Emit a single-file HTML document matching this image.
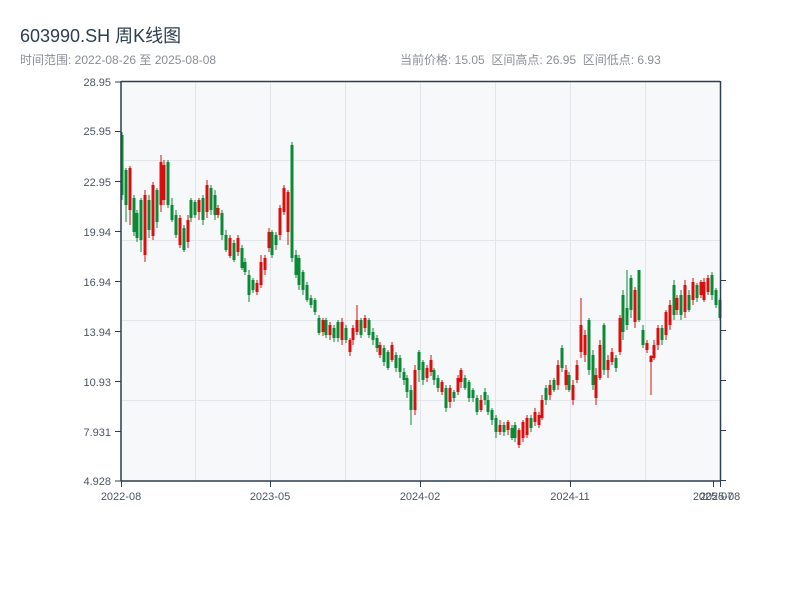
<!DOCTYPE html>
<html><head><meta charset="utf-8">
<style>
html,body{margin:0;padding:0;background:#fff;width:800px;height:600px;overflow:hidden;font-family:"Liberation Sans","Noto Sans CJK SC",sans-serif}
.t{position:absolute;left:20px;top:22px;font-size:18px;color:#2c3e50}
.s{position:absolute;left:20px;top:51px;font-size:12px;color:#8a8f95}
.r{position:absolute;left:400px;top:51px;font-size:12px;color:#8a8f95}
svg{position:absolute;left:0;top:0}
</style></head><body>
<div class="t">603990.SH 周K线图</div>
<div class="s">时间范围: 2022-08-26 至 2025-08-08</div>
<div class="r">当前价格: 15.05&nbsp;&nbsp;区间高点: 26.95&nbsp;&nbsp;区间低点: 6.93</div>
<svg width="800" height="600" xmlns="http://www.w3.org/2000/svg" font-family="Liberation Sans, sans-serif" font-size="11">
<rect x="121" y="81" width="599" height="400" fill="#f6f8fa"/>
<g stroke="#e2e5e9" stroke-width="1">
<line x1="195.5" y1="81" x2="195.5" y2="481"/><line x1="270.5" y1="81" x2="270.5" y2="481"/>
<line x1="345.5" y1="81" x2="345.5" y2="481"/><line x1="420.5" y1="81" x2="420.5" y2="481"/>
<line x1="495.5" y1="81" x2="495.5" y2="481"/><line x1="570.5" y1="81" x2="570.5" y2="481"/>
<line x1="645.5" y1="81" x2="645.5" y2="481"/>
<line x1="121" y1="160.5" x2="720" y2="160.5"/><line x1="121" y1="240.5" x2="720" y2="240.5"/>
<line x1="121" y1="320.5" x2="720" y2="320.5"/><line x1="121" y1="400.5" x2="720" y2="400.5"/>
</g>
<g fill="none">
<path stroke="#0b8a35" stroke-width="1" d="M122 132V200M126 168V222M134 195V236M137 210V242M141 198V252M149 195V238M157 188V228M168 160V208M172 198V222M176 210V238M184 225V252M191 198V222M195 200V218M203 195V225M211 185V215M215 190V220M222 210V240M226 230V252M234 240V262M242 245V270M245 258V275M249 270V302M253 278V293M272 230V258M276 232V250M292 142V262M296 250V278M299 255V290M303 270V295M307 282V302M311 295V308M315 298V315M319 315V335M326 318V338M334 325V342M338 320V342M346 325V343M361 318V338M369 318V338M373 328V345M377 335V352M384 345V366M388 350V370M396 352V372M400 355V378M404 368V385M407 375V398M411 385V425M419 350V382M423 360V385M434 368V385M438 375V392M446 385V412M454 390V402M465 375V390M469 380V402M473 388V402M477 395V415M485 388V405M488 395V415M492 408V425M496 415V438M504 422V436M512 425V440M515 422V442M531 415V432M546 385V405M554 378V392M562 345V372M569 372V392M589 318V375M593 350V390M604 323V375M616 355V372M623 290V340M627 270V330M631 275V318M639 270V322M643 325V348M662 325V345M674 280V320M681 290V320M689 290V312M697 283V302M712 272V300M716 288V308M720 298V320"/>
<path stroke="#0b8a35" stroke-width="3" d="M122 135V195M126 170V205M134 198V232M137 213V238M141 200V240M149 200V230M157 190V222M168 162V205M172 205V220M176 215V235M184 228V250M191 200V218M195 202V215M203 198V220M211 188V210M215 195V215M222 213V235M226 235V250M234 243V260M242 248V268M245 262V272M249 275V295M253 280V290M272 232V255M276 235V245M292 145V258M296 255V275M299 258V285M303 272V290M307 285V300M311 298V305M315 300V312M319 318V333M326 320V335M334 328V338M338 322V338M346 328V340M361 320V335M369 320V335M373 332V340M377 338V348M384 348V362M388 352V368M396 355V368M400 358V372M404 372V380M407 378V392M411 390V410M419 352V370M423 362V380M434 370V380M438 378V388M446 388V408M454 392V398M465 378V388M469 382V398M473 390V398M477 398V412M485 392V400M488 400V412M492 410V420M496 418V432M504 425V432M512 428V438M515 425V438M531 418V428M546 388V400M554 380V390M562 348V368M569 375V390M589 320V370M593 355V385M604 325V370M616 358V368M623 295V332M627 308V325M631 278V310M639 270V320M643 330V345M662 328V340M674 285V315M681 295V315M689 295V310M697 285V298M712 275V295M716 290V305M720 300V318"/>
<path stroke="#d90f0f" stroke-width="1" d="M130 166V225M145 190V262M153 182V240M161 155V212M164 160V205M180 215V248M188 215V248M199 198V220M207 180V218M218 205V218M230 235V258M238 235V256M257 280V295M261 255V288M265 255V275M269 228V252M280 205V240M284 185V215M288 190V245M323 318V336M330 322V340M342 318V345M350 338V356M353 325V345M357 305V335M365 315V332M380 342V358M392 342V362M415 365V415M427 365V382M431 355V376M442 380V395M450 385V408M458 375V395M461 368V388M481 395V412M500 420V435M508 420V435M519 428V448M523 420V442M527 415V438M535 408V426M539 412V428M542 395V420M550 380V400M558 360V390M566 365V390M573 380V405M577 360V383M581 298V358M585 330V362M596 368V405M600 340V380M608 355V378M612 348V365M620 315V355M635 287V328M647 340V353M651 355V395M654 340V360M658 325V350M666 310V340M670 300V330M677 295V315M685 280V318M693 278V305M701 280V298M704 278V302M708 275V295"/>
<path stroke="#d90f0f" stroke-width="3" d="M130 168V210M145 195V255M153 185V236M161 162V205M164 165V200M180 218V245M188 220V242M199 200V212M207 185V212M218 208V215M230 238V256M238 238V252M257 283V292M261 262V285M265 258V270M269 232V248M280 208V235M284 188V212M288 192V232M323 320V332M330 325V335M342 322V340M350 340V352M353 328V340M357 320V332M365 318V328M380 345V355M392 345V360M415 370V410M427 368V378M431 360V372M442 382V392M450 388V402M458 378V392M461 370V382M481 400V410M500 425V432M508 422V430M519 430V445M523 422V438M527 418V435M535 412V422M539 415V425M542 400V418M550 385V395M558 365V385M566 370V385M573 385V400M577 365V380M581 325V352M585 335V355M596 375V398M600 345V378M608 360V370M612 352V362M620 318V352M635 290V322M647 343V350M651 356V362M654 345V358M658 328V345M666 312V335M670 305V325M677 298V310M685 285V312M693 282V300M701 282V295M704 282V300M708 278V292"/>
</g>
<g stroke="#2c3e50" stroke-width="1.5" fill="none">
<line x1="121" y1="81" x2="121" y2="481"/><line x1="121" y1="481" x2="720" y2="481"/>
<line x1="720.5" y1="81" x2="720.5" y2="481"/><line x1="121" y1="81.5" x2="720" y2="81.5"/>
</g>
<g stroke="#2c3e50" stroke-width="1">
<line x1="115" y1="82" x2="121" y2="82"/><line x1="115" y1="131.5" x2="121" y2="131.5"/><line x1="115" y1="181.5" x2="121" y2="181.5"/><line x1="115" y1="231.5" x2="121" y2="231.5"/><line x1="115" y1="281.5" x2="121" y2="281.5"/><line x1="115" y1="331.5" x2="121" y2="331.5"/><line x1="115" y1="381.5" x2="121" y2="381.5"/><line x1="115" y1="431.5" x2="121" y2="431.5"/><line x1="115" y1="481" x2="121" y2="481"/>
<line x1="720" y1="280.5" x2="726" y2="280.5"/><line x1="720" y1="330.5" x2="726" y2="330.5"/><line x1="720" y1="380.5" x2="726" y2="380.5"/><line x1="720" y1="430.5" x2="726" y2="430.5"/><line x1="720" y1="480.5" x2="726" y2="480.5"/>
<line x1="121.5" y1="481" x2="121.5" y2="487"/><line x1="270.5" y1="481" x2="270.5" y2="487"/><line x1="420.5" y1="481" x2="420.5" y2="487"/><line x1="570.5" y1="481" x2="570.5" y2="487"/><line x1="713.5" y1="481" x2="713.5" y2="487"/><line x1="720.5" y1="481" x2="720.5" y2="487"/>
</g>
<g fill="#4a5563" text-anchor="end">
<text x="111" y="86">28.95</text><text x="111" y="135">25.95</text><text x="111" y="186">22.95</text><text x="111" y="236">19.94</text><text x="111" y="286">16.94</text><text x="111" y="336">13.94</text><text x="111" y="386">10.93</text><text x="111" y="436">7.931</text><text x="111" y="485">4.928</text>
</g>
<g fill="#4a5563" text-anchor="middle">
<text x="121" y="500">2022-08</text><text x="270" y="500">2023-05</text><text x="420" y="500">2024-02</text><text x="570" y="500">2024-11</text><text x="713" y="500">2025-07</text><text x="720" y="500">2025-08</text>
</g>
</svg>
</body></html>
